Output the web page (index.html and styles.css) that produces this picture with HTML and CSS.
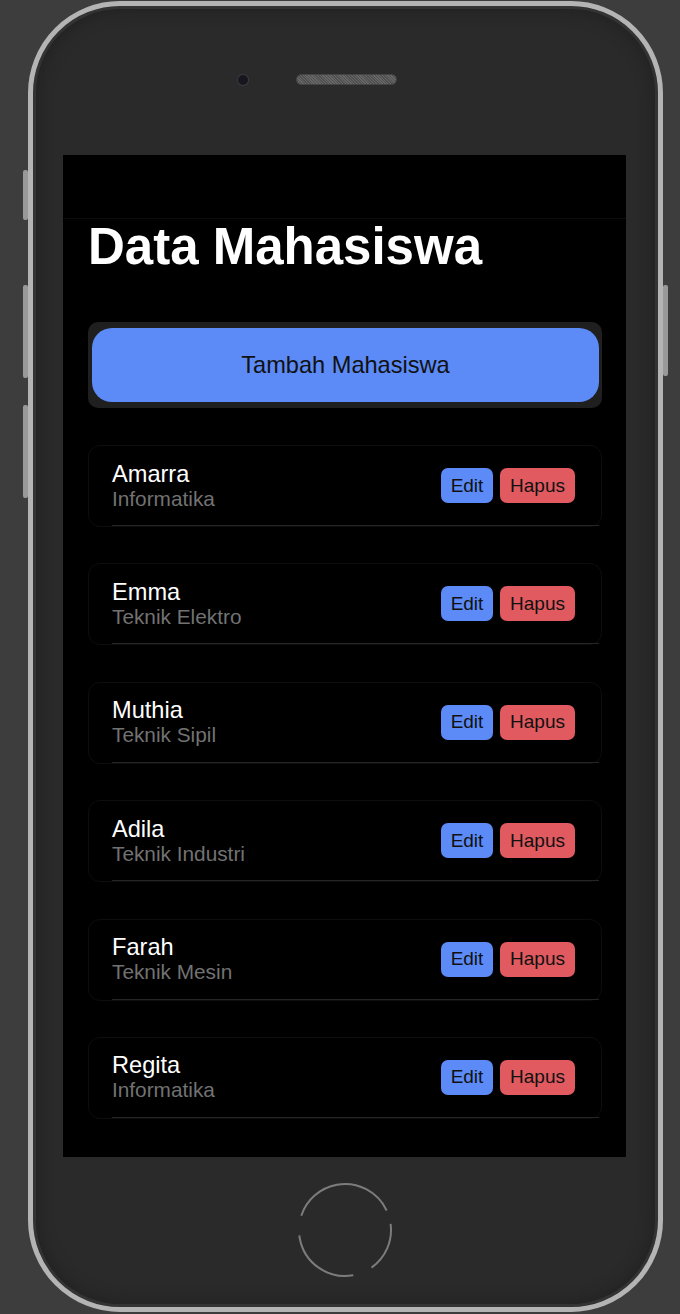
FILE: index.html
```html
<!DOCTYPE html>
<html lang="id">
<head>
<meta charset="utf-8">
<title>Data Mahasiswa</title>
<link rel="stylesheet" href="styles.css">
</head>
<body>
<div class="phone">
  <span class="side-btn left b1"></span>
  <span class="side-btn left b2"></span>
  <span class="side-btn left b3"></span>
  <span class="side-btn right b4"></span>
  <div class="phone-top">
    <span class="camera"></span>
    <span class="speaker"></span>
  </div>
  <div class="screen">
    <div class="statusbar"></div>
    <div class="content">
      <h1 class="title">Data Mahasiswa</h1>
      <div class="add-wrap">
        <button class="add-btn">Tambah Mahasiswa</button>
      </div>
      <ul class="list">
        <li class="card"><div class="row"><div class="info"><div class="name">Amarra</div><div class="major">Informatika</div></div><div class="actions"><button class="btn edit">Edit</button><button class="btn del">Hapus</button></div></div></li>
        <li class="card"><div class="row"><div class="info"><div class="name">Emma</div><div class="major">Teknik Elektro</div></div><div class="actions"><button class="btn edit">Edit</button><button class="btn del">Hapus</button></div></div></li>
        <li class="card"><div class="row"><div class="info"><div class="name">Muthia</div><div class="major">Teknik Sipil</div></div><div class="actions"><button class="btn edit">Edit</button><button class="btn del">Hapus</button></div></div></li>
        <li class="card"><div class="row"><div class="info"><div class="name">Adila</div><div class="major">Teknik Industri</div></div><div class="actions"><button class="btn edit">Edit</button><button class="btn del">Hapus</button></div></div></li>
        <li class="card"><div class="row"><div class="info"><div class="name">Farah</div><div class="major">Teknik Mesin</div></div><div class="actions"><button class="btn edit">Edit</button><button class="btn del">Hapus</button></div></div></li>
        <li class="card"><div class="row"><div class="info"><div class="name">Regita</div><div class="major">Informatika</div></div><div class="actions"><button class="btn edit">Edit</button><button class="btn del">Hapus</button></div></div></li>
      </ul>
    </div>
  </div>
  <div class="phone-bottom">
    <svg class="home" width="100" height="100" viewBox="0 0 100 100">
      <circle cx="50" cy="50" r="46" fill="none" stroke="#7c7c7c" stroke-width="2" stroke-dasharray="60 14 50 20 75 20" transform="rotate(-100 50 50)"/>
    </svg>
  </div>
</div>
</body>
</html>
```
FILE: styles.css
```css
* { box-sizing: border-box; }
html, body { margin: 0; padding: 0; }
body {
  background: #3d3d3d;
  width: 680px;
  height: 1314px;
  overflow: hidden;
  font-family: "Liberation Sans", Arial, sans-serif;
}
.phone {
  position: relative;
  margin: 1px 0 0 28px;
  width: 635px;
  height: 1311px;
  border: 5px solid #b4b4b4;
  border-radius: 92px;
  background: #2a2a2a;
  box-shadow: inset 0 0 0 3px #333, inset 0 0 14px 6px #222;
  display: flex;
  flex-direction: column;
  padding: 0 32px 0 30px;
}
.side-btn {
  position: absolute;
  width: 5px;
  background: #999;
  border-radius: 2px;
}
.side-btn.left { left: -10px; }
.side-btn.right { right: -10px; }
.b1 { top: 164px; height: 50px; }
.b2 { top: 279px; height: 93px; }
.b3 { top: 399px; height: 93px; }
.b4 { top: 279px; height: 91px; }
.phone-top {
  height: 155px;
  margin-top: -6px;
  flex: none;
  display: flex;
  align-items: center;
  padding: 4px 0 0 175px;
  gap: 49px;
}
.camera {
  width: 10px;
  height: 10px;
  border-radius: 50%;
  background: #16161c;
  box-shadow: 0 0 0 1px #3a3a44;
}
.speaker {
  width: 99px;
  height: 9px;
  border-radius: 5px;
  background: repeating-linear-gradient(45deg, #666 0 1px, #505050 1px 2px);
  box-shadow: 0 0 0 1px #444;
}
.screen {
  flex: none;
  height: 1002px;
  background: #000;
  display: flex;
  flex-direction: column;
}
.statusbar {
  height: 64px;
  flex: none;
  border-bottom: 1px solid #0c0c0c;
}
.content {
  padding: 0 24px;
}
.title {
  margin: 0 0 0 1px;
  font-size: 51px;
  line-height: 56px;
  font-weight: 700;
  color: #fff;
}
.add-wrap {
  margin-top: 47px;
  background: #1f1f1f;
  border-radius: 10px;
  padding: 6px 3px 6px 4px;
  margin-left: 1px;
}
.add-btn {
  display: block;
  width: 100%;
  height: 74px;
  border: 0;
  border-radius: 20px;
  background: #5c8bf7;
  color: #111;
  font-family: "Liberation Sans", Arial, sans-serif;
  font-size: 23.6px;
  padding: 0;
}
.list {
  list-style: none;
  margin: 37px 0 0 0;
  padding: 0;
  display: flex;
  flex-direction: column;
  gap: 36.4px;
}
.card {
  height: 82px;
  margin-left: 1px;
  border: 1px solid #0d0d0d;
  border-radius: 12px;
  display: flex;
}
.row {
  flex: 1;
  margin-left: 23px;
  margin-right: 2px;
  padding-right: 24px;
  display: flex;
  align-items: center;
  justify-content: space-between;
  border-bottom: 1px solid #262626;
}
.info { display: flex; flex-direction: column; }
.name {
  color: #fff;
  font-size: 23.6px;
  line-height: 25px;
}
.major {
  color: #727272;
  font-size: 20.8px;
  line-height: 23px;
}
.actions {
  display: flex;
  gap: 7px;
}
.btn {
  height: 35px;
  border: 0;
  border-radius: 7px;
  font-family: "Liberation Sans", Arial, sans-serif;
  font-size: 19px;
  color: #111;
}
.btn.edit { background: #5c8bf7; width: 52px; padding: 0; }
.btn.del { background: #e05a5f; width: 75px; padding: 0; }
.phone-bottom {
  flex: 1;
  display: flex;
  justify-content: center;
  padding-top: 23px;
}
.home { display: block; }
```
